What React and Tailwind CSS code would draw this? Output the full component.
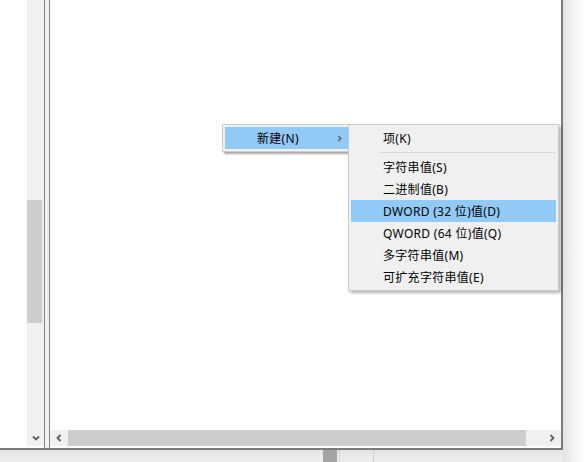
import React from 'react';

function Chevron({ dir = 'down', className = '' }) {
  const pts = {
    down: '1,1.5 4,4.5 7,1.5',
    left: '4.5,1 1.5,4 4.5,7',
    right: '1.5,1 4.5,4 1.5,7',
  }[dir];
  const box = dir === 'down' ? '0 0 8 6' : '0 0 6 8';
  return (
    <svg viewBox={box} className={className} fill="none" stroke="#606060" strokeWidth="1.8">
      <polyline points={pts} />
    </svg>
  );
}

const items = [
  { label: '字符串值(S)' },
  { label: '二进制值(B)' },
  { label: 'DWORD (32 位)值(D)', active: true },
  { label: 'QWORD (64 位)值(Q)' },
  { label: '多字符串值(M)' },
  { label: '可扩充字符串值(E)' },
];

export default function App() {
  return (
    <div className="relative w-[584px] h-[462px] overflow-hidden bg-white flex font-['Noto_Sans','Noto_Sans_CJK_SC',sans-serif] text-[12px] tracking-[0.3px] text-black">
      <div className="w-[563px] flex flex-col">
        <div className="flex h-[448px]">
          <div className="w-[27px] bg-white" />
          {/* vertical scrollbar of the tree pane */}
          <div className="w-[17px] h-[446px] bg-[#f0f0f0] flex flex-col">
            <div className="h-[200px]" />
            <div className="h-[123px] w-[15px] bg-[#cdcdcd]" />
            <div className="flex-1" />
            <div className="h-[17px] flex items-center justify-center">
              <Chevron dir="down" className="w-[8px] h-[6px]" />
            </div>
          </div>
          {/* splitter */}
          <div className="w-px bg-[#858585]" />
          <div className="w-[4px] bg-[#f0f0f0]" />
          <div className="w-px bg-[#858585]" />
          {/* value pane */}
          <div className="w-[511px] flex flex-col bg-white">
            <div className="flex-1" />
            <div className="h-[16px] flex bg-[#f0f0f0]">
              <div className="w-[18px] flex items-center justify-center">
                <Chevron dir="left" className="w-[6px] h-[8px]" />
              </div>
              <div className="w-[458px] bg-[#cdcdcd]" />
              <div className="flex-1" />
              <div className="w-[18px] flex items-center justify-center">
                <Chevron dir="right" className="w-[6px] h-[8px]" />
              </div>
            </div>
            <div className="h-[2px]" />
          </div>
          <div className="w-[2px] bg-[#7b7b7b]" />
        </div>
        <div className="h-[2px] bg-[#7b7b7b]" />
        <div className="flex-1 flex bg-gradient-to-b from-[#e4e4e4] to-[#efefef]">
          <div className="ml-[323px] w-[14px] bg-[#a3a3a3]" />
          <div className="ml-[2px] w-px bg-[#d6d6d6]" />
          <div className="ml-[33px] w-px bg-[#cfcfcf]" />
        </div>
      </div>
      <div className="flex-1 bg-gradient-to-r from-[#e2e2e2] via-[#f3f3f3] to-white" />

      {/* context menu */}
      <div className="absolute left-[222px] top-[124px] w-[130px] border border-[#cccccc] bg-[#f0f0f0] p-[2px] shadow-[2px_2px_2px_rgba(0,0,0,0.35)]">
        <div className="h-[22px] bg-[#91c9f7] flex items-center pl-[32px] pr-[7px] pt-px">
          <span className="flex-1">新建(N)</span>
          <Chevron dir="right" className="w-[5px] h-[7px]" />
        </div>
      </div>

      {/* submenu */}
      <div className="absolute z-10 left-[348px] top-[124px] w-[211px] border border-[#cccccc] bg-[#f0f0f0] p-[2px] shadow-[2px_2px_3px_rgba(0,0,0,0.3)]">
        <div className="h-[22px] flex items-center pl-[32px] pt-px">项(K)</div>
        <div className="h-[7px] flex items-center pl-[28px]">
          <div className="h-px flex-1 bg-[#d7d7d7]" />
        </div>
        {items.map((it) => (
          <div
            key={it.label}
            className={`h-[22px] flex items-center pl-[32px] pt-px ${it.active ? 'bg-[#91c9f7]' : ''}`}
          >
            {it.label}
          </div>
        ))}
      </div>
    </div>
  );
}
